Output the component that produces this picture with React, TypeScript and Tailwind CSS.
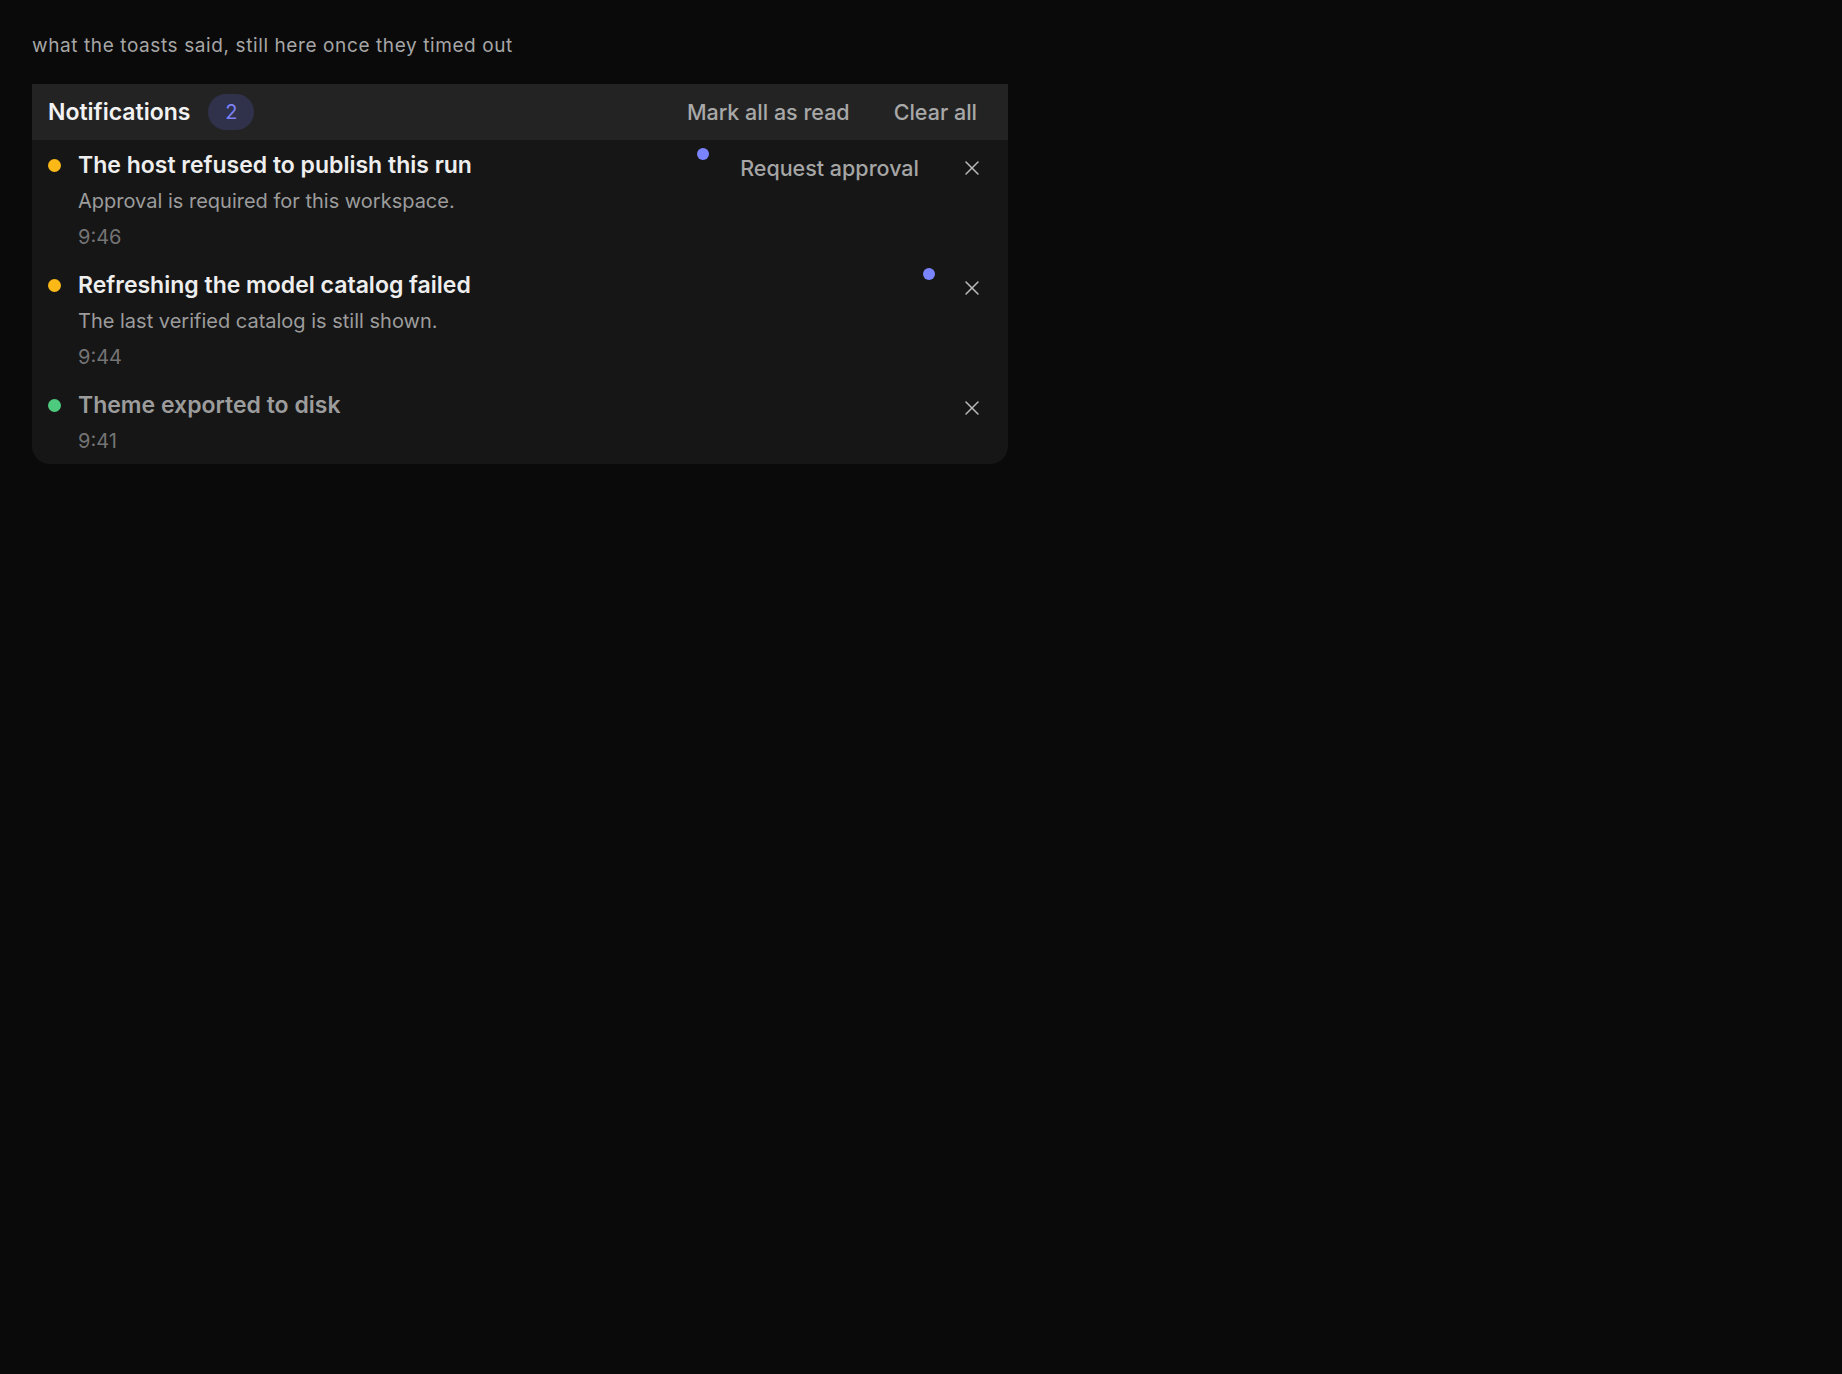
import { X } from 'lucide-react';

type Note = {
  id: number;
  tone: 'warn' | 'ok';
  title: string;
  body?: string;
  time: string;
  unread: boolean;
  action?: string;
};

const notes: Note[] = [
  {
    id: 1,
    tone: 'warn',
    title: 'The host refused to publish this run',
    body: 'Approval is required for this workspace.',
    time: '9:46',
    unread: true,
    action: 'Request approval',
  },
  {
    id: 2,
    tone: 'warn',
    title: 'Refreshing the model catalog failed',
    body: 'The last verified catalog is still shown.',
    time: '9:44',
    unread: true,
  },
  { id: 3, tone: 'ok', title: 'Theme exported to disk', time: '9:41', unread: false },
];

const NoteRow = ({ note }: { note: Note }) => {
  return (
    <li className="flex items-start pl-4 pr-5 pt-3 pb-2.5">
      {/* status */}
      <span
        className={
          note.tone === 'warn'
            ? 'mt-[6.5px] h-[13px] w-[13px] shrink-0 rounded-full bg-[#fbb817]'
            : 'mt-[6.5px] h-[13px] w-[13px] shrink-0 rounded-full bg-[#4dca7d]'
        }
      />

      <div className="ml-[17px] flex-1">
        <p
          className={
            note.unread
              ? 'text-[23px] leading-[26px] font-semibold text-[#eeeeee]'
              : 'text-[23px] leading-[26px] font-semibold text-[#9c9c9c]'
          }
        >
          {note.title}
        </p>
        {note.body && <p className="mt-2.5 text-[20px] leading-[26px] text-[#9c9c9c]">{note.body}</p>}
        <p className="mt-2.5 text-[20px] leading-[26px] text-[#747474]">{note.time}</p>
      </div>

      {/* right side */}
      <div className="flex items-start">
        {note.unread && <span className="-mt-1 h-3 w-3 rounded-full bg-[#7b84ff]" />}
        {note.action && (
          <button className="ml-[19px] flex h-8 items-center px-3 text-[21.5px] font-medium text-[#a5a5a5]">
            {note.action}
          </button>
        )}
        <button
          className={
            note.action
              ? 'ml-[25px] flex h-8 w-8 items-center justify-center text-[#bcbcbc]'
              : 'ml-[21px] flex h-8 w-8 items-center justify-center text-[#bcbcbc]'
          }
        >
          <X size={24} strokeWidth={1.5} />
        </button>
      </div>
    </li>
  );
};

export default function App() {
  const unreadCount = notes.filter((n) => n.unread).length;

  return (
    <div className="min-h-screen bg-[#0a0a0a] p-8 font-['Inter',sans-serif]">
      <p className="text-[19px] leading-7 tracking-[0.6px] text-[#a6a6a6]">
        what the toasts said, still here once they timed out
      </p>

      <section className="mt-6 w-[976px] overflow-hidden rounded-b-[18px] bg-[#161616]">
        {/* Header */}
        <header className="flex h-14 items-center bg-[#232323] pl-4 pr-[19px]">
          <h2 className="text-[23px] font-semibold text-[#f2f2f2]">Notifications</h2>
          <span className="ml-[18px] flex h-9 w-[46px] items-center justify-center rounded-full bg-[#30324b] text-[20px] text-[#7c81f6]">
            {unreadCount}
          </span>
          <div className="ml-auto flex items-center gap-5">
            <button className="px-3 text-[21.5px] font-medium text-[#a8a8a8]">Mark all as read</button>
            <button className="px-3 text-[21.5px] font-medium text-[#a8a8a8]">Clear all</button>
          </div>
        </header>

        <ul>
          {notes.map((note) => (
            <NoteRow key={note.id} note={note} />
          ))}
        </ul>
      </section>
    </div>
  );
}
